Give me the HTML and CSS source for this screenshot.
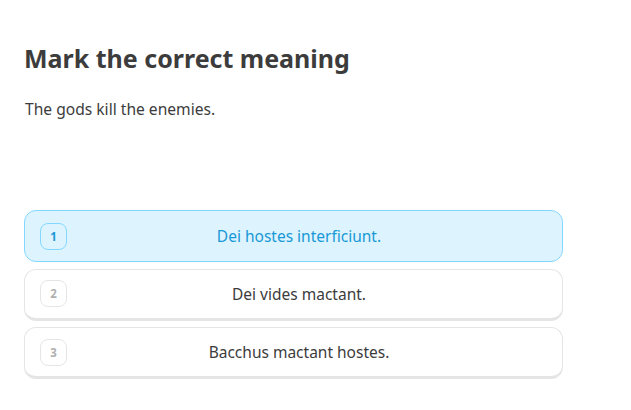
FILE: index.html
```html
<!DOCTYPE html>
<html>
<head>
<meta charset="utf-8">
<link rel="stylesheet" href="styles.css">
</head>
<body>
<main class="challenge">
  <h1 class="title">Mark the correct meaning</h1>
  <p class="prompt">The gods kill the enemies.</p>
  <div class="choices">
    <div class="choice selected">
      <span class="key">1</span>
      <span class="label">Dei hostes interficiunt.</span>
    </div>
    <div class="choice">
      <span class="key">2</span>
      <span class="label">Dei vides mactant.</span>
    </div>
    <div class="choice">
      <span class="key">3</span>
      <span class="label">Bacchus mactant hostes.</span>
    </div>
  </div>
</main>
</body>
</html>
```
FILE: styles.css
```css
html, body {
  margin: 0;
  background: #ffffff;
}
body {
  font-family: "Noto Sans", "DejaVu Sans", sans-serif;
  color: #3c3c3c;
}
.challenge {
  width: 539px;
  padding: 38px 0 0 24px;
}
.title {
  margin: 0;
  font-size: 25px;
  line-height: 40px;
  font-weight: 700;
  color: #3c3c3c;
}
.prompt {
  margin: 20px 0 0 1px;
  font-size: 15.6px;
  line-height: 22px;
}
.choices {
  margin-top: 90px;
  display: flex;
  flex-direction: column;
  gap: 6.5px;
}
.choice {
  position: relative;
  box-sizing: border-box;
  height: 52px;
  display: flex;
  align-items: center;
  border: 1px solid #e5e5e5;
  border-bottom: 3px solid #e5e5e5;
  border-radius: 12px;
  background: #fff;
  padding: 0 15px;
}
.choice.selected {
  background: #ddf4ff;
  border-color: #84d8ff;
  border-bottom-width: 1px;
  color: #1899d6;
}
.key {
  box-sizing: border-box;
  width: 27px;
  height: 27px;
  border: 1px solid #e5e5e5;
  border-radius: 8px;
  display: flex;
  align-items: center;
  justify-content: center;
  font-size: 11.5px;
  font-weight: 700;
  color: #afafaf;
  flex: none;
}
.selected .key {
  border-color: #84d8ff;
  color: #1899d6;
}
.label {
  flex: 1;
  text-align: center;
  font-size: 15.5px;
  margin-right: 16px;
}
```
